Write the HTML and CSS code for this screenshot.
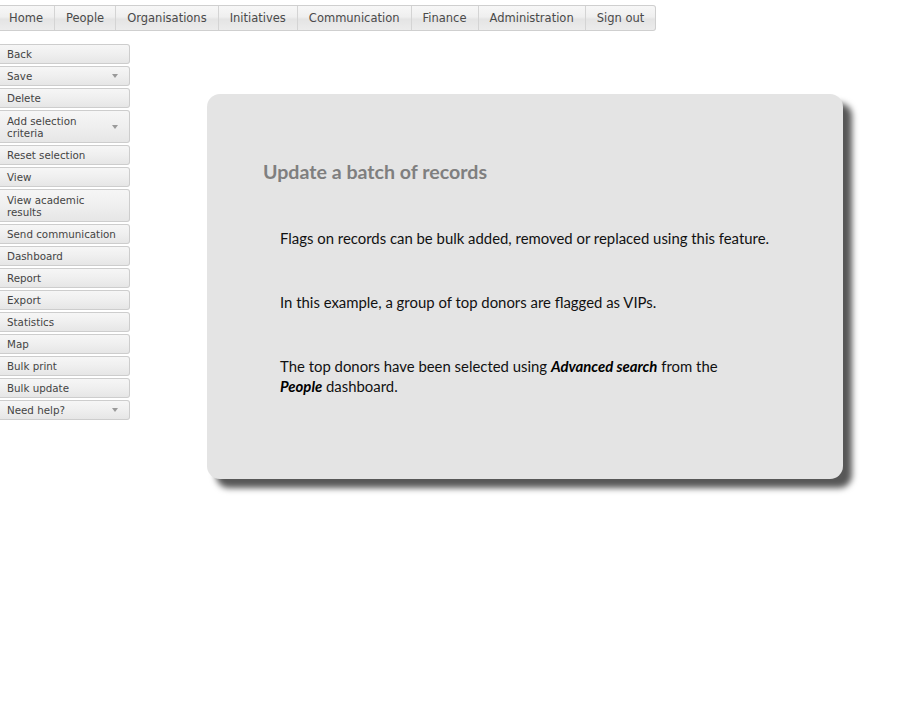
FILE: index.html
```html
<!DOCTYPE html>
<html>
<head>
<meta charset="utf-8">
<link rel="stylesheet" href="styles.css">
</head>
<body>
<nav class="topnav">
  <a class="nav-item">Home</a>
  <a class="nav-item">People</a>
  <a class="nav-item">Organisations</a>
  <a class="nav-item">Initiatives</a>
  <a class="nav-item">Communication</a>
  <a class="nav-item">Finance</a>
  <a class="nav-item">Administration</a>
  <a class="nav-item last">Sign out</a>
</nav>
<div class="main">
  <aside class="sidebar">
    <div class="btn">Back</div>
    <div class="btn drop">Save<span class="arrow"></span></div>
    <div class="btn">Delete</div>
    <div class="btn drop two">Add selection<br>criteria<span class="arrow"></span></div>
    <div class="btn">Reset selection</div>
    <div class="btn">View</div>
    <div class="btn two">View academic<br>results</div>
    <div class="btn">Send communication</div>
    <div class="btn">Dashboard</div>
    <div class="btn">Report</div>
    <div class="btn">Export</div>
    <div class="btn">Statistics</div>
    <div class="btn">Map</div>
    <div class="btn">Bulk print</div>
    <div class="btn">Bulk update</div>
    <div class="btn drop">Need help?<span class="arrow"></span></div>
  </aside>
  <section class="card">
    <h1 class="title">Update a batch of records</h1>
    <p class="para">Flags on records can be bulk added, removed or replaced using this feature.</p>
    <p class="para">In this example, a group of top donors are flagged as VIPs.</p>
    <p class="para">The top donors have been selected using <b><i>Advanced search</i></b> from the<br><b><i>People</i></b> dashboard.</p>
  </section>
</div>
</body>
</html>
```
FILE: styles.css
```css
html, body {
  margin: 0;
  padding: 0;
  background: #fff;
}
body {
  min-height: 728px;
}
.topnav {
  display: flex;
  margin-top: 5px;
  height: 24px;
  width: max-content;
  border: 1px solid #cfcfcf;
  border-left: none;
  border-radius: 0 3px 3px 0;
  background: linear-gradient(#f7f7f7 0%, #efefef 45%, #e4e4e4 55%, #ececec 100%);
  font-family: "DejaVu Sans", Verdana, sans-serif;
  font-size: 11.5px;
}
.nav-item {
  display: flex;
  align-items: center;
  padding: 0 11px 0 11px;
  color: #4a4a4a;
  border-right: 1px solid #d4d4d4;
}
.nav-item:first-child { padding-left: 9px; }
.nav-item.last { border-right: none; }
.main {
  display: flex;
  align-items: flex-start;
  margin-top: 13px;
  padding-bottom: 40px;
}
.sidebar {
  display: flex;
  flex-direction: column;
  gap: 2px;
  width: 130px;
  flex-shrink: 0;
}
.btn {
  position: relative;
  box-sizing: border-box;
  height: 20px;
  display: flex;
  align-items: center;
  padding: 0 0 0 7px;
  border: 1px solid #cdcdcd;
  border-left: none;
  border-radius: 0 3px 3px 0;
  background: linear-gradient(#f6f6f6 0%, #efefef 50%, #e6e6e6 100%);
  font-family: "DejaVu Sans", Verdana, sans-serif;
  font-size: 10.3px;
  color: #444;
  line-height: 12px;
}
.btn.two { height: 33px; }
.arrow {
  position: absolute;
  right: 11px;
  top: 50%;
  margin-top: -2px;
  width: 0;
  height: 0;
  border-left: 3.5px solid transparent;
  border-right: 3.5px solid transparent;
  border-top: 4px solid #9a9a9a;
}
.card {
  margin-left: 77px;
  margin-top: 50px;
  width: 636px;
  height: 385px;
  box-sizing: border-box;
  background: #e4e4e4;
  border-radius: 13px;
  box-shadow: 9px 9px 6px #575757;
  padding: 66px 0 0 56px;
  font-family: Lato, "Open Sans", sans-serif;
}
.title {
  margin: 0 0 44px 0;
  font-size: 19.6px;
  font-weight: bold;
  color: #7f7f7f;
  line-height: 24px;
}
.para {
  margin: 0 0 44px 17px;
  font-size: 14.9px;
  line-height: 20px;
  color: #111;
}
.para b { color: #000; }
```
